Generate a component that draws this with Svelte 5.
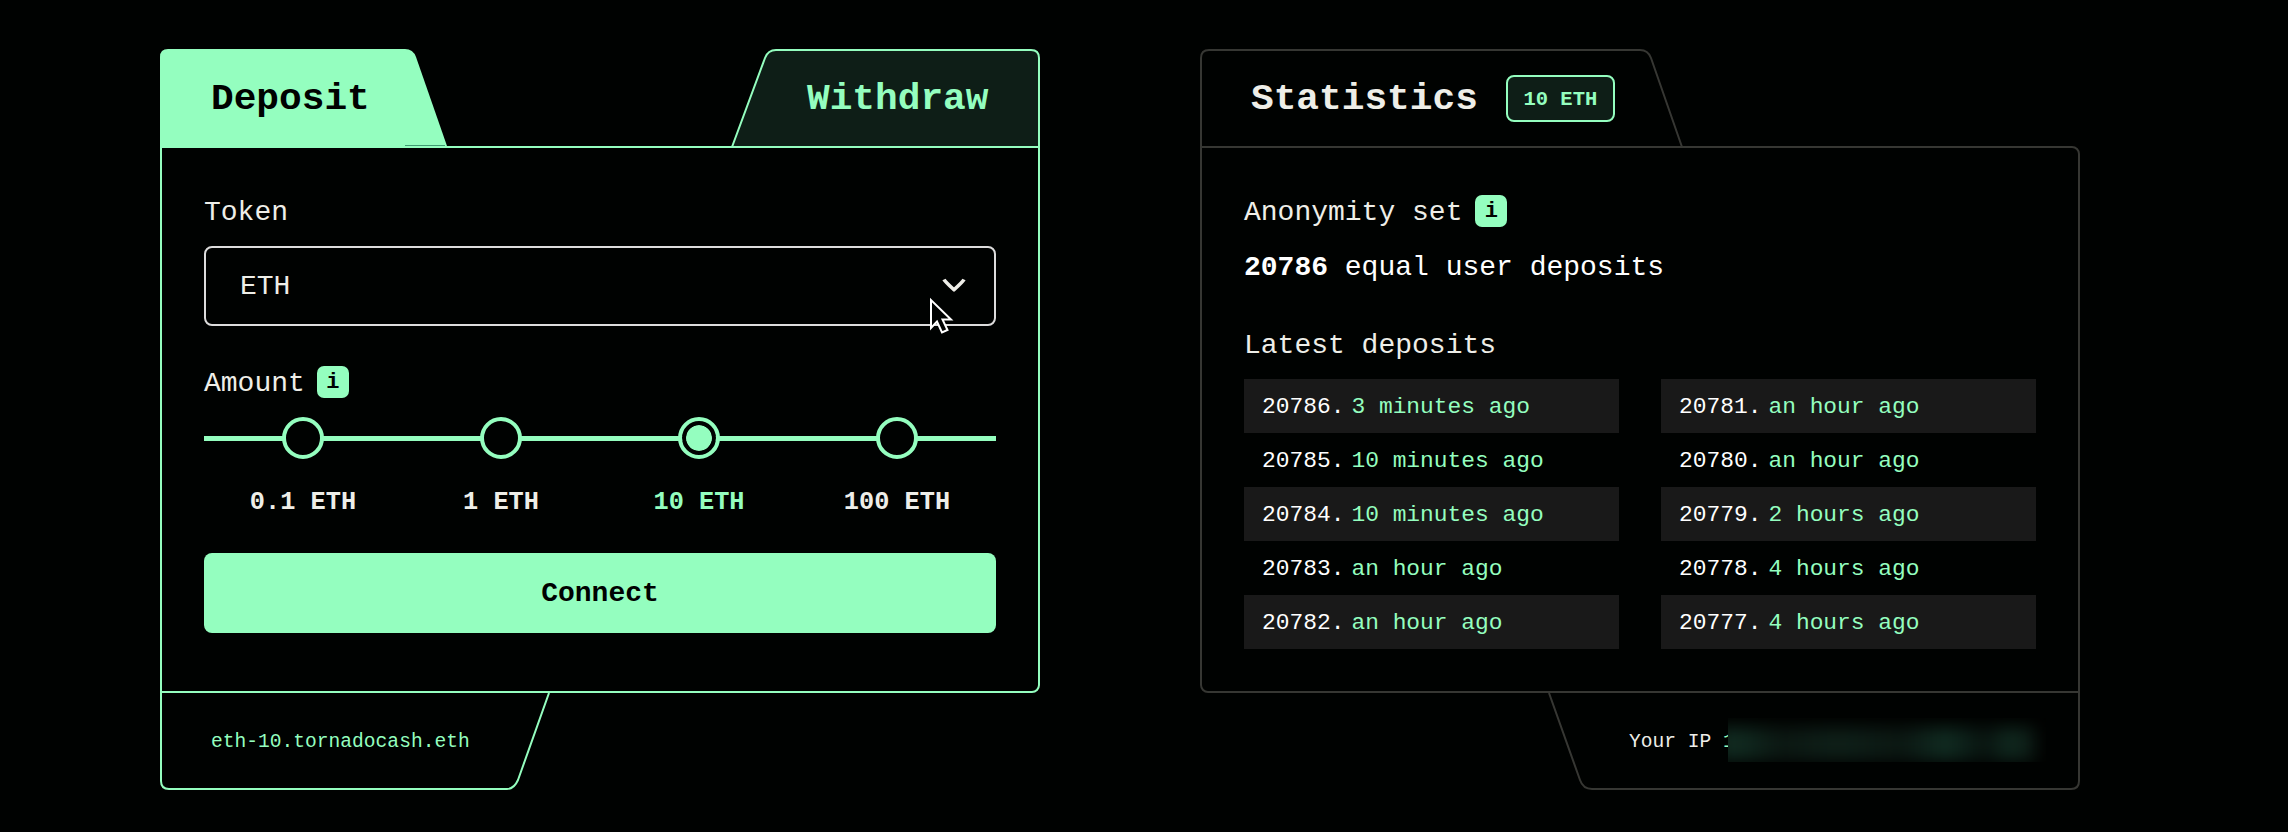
<script>
  const amounts = ['0.1 ETH', '1 ETH', '10 ETH', '100 ETH'];
  let selected = $state(2);
  const columns = [
    [
      [20786, '3 minutes ago'],
      [20785, '10 minutes ago'],
      [20784, '10 minutes ago'],
      [20783, 'an hour ago'],
      [20782, 'an hour ago']
    ],
    [
      [20781, 'an hour ago'],
      [20780, 'an hour ago'],
      [20779, '2 hours ago'],
      [20778, '4 hours ago'],
      [20777, '4 hours ago']
    ]
  ];
</script>

<main>
  <section class="panel green">
    <header>
      <button class="tab deposit">
        <svg class="shape" width="287" height="99" viewBox="0 0 287 99"><path d="M0 99V8Q0 0 8 0H245Q253 0 256 8L287 97V99Z" fill="#94febf" /><path d="M245 96.500H285" stroke="#3f9a72" /></svg>
        <span>Deposit</span>
      </button>
      <button class="tab withdraw">
        <svg class="shape" width="309" height="99" viewBox="0 0 309 99"><path d="M1 98L34 9Q37 1 45 1H300Q308 1 308 9V98" fill="#0e1e17" stroke="#94febf" stroke-width="2" /></svg>
        <span>Withdraw</span>
      </button>
    </header>
    <div class="body">
      <div class="label"><span>Token</span></div>
      <div class="select">
        <span>ETH</span>
        <svg width="24" height="16" viewBox="0 0 24 16"><path d="M2 1.500Q3 3.500 12 11.800Q21 3.500 22 1.500" fill="none" stroke="#eeeee8" stroke-width="3.600" stroke-linejoin="round" /></svg>
        <svg class="cursor" width="26" height="40" viewBox="0 0 26 40"><path d="M2 3V31L8 24.500L13 35.500L18.500 33L13.500 22.500H22Z" fill="#000201" stroke="#fff" stroke-width="2" /></svg>
      </div>
      <div class="label amount"><span>Amount</span><i>i</i></div>
      <div class="steps">
        {#each amounts as amount, n}
          <button class="step" class:on={n === selected} onclick={() => (selected = n)}>
            <span class="dot"></span>
            <b>{amount}</b>
          </button>
        {/each}
      </div>
      <button class="connect">Connect</button>
    </div>
    <footer>
      <div class="foot address">
        <svg class="shape" width="391" height="98" viewBox="0 0 391 98"><path d="M1 0V88Q1 96 9 96H347Q354 96 358 87L389 0" fill="none" stroke="#94febf" stroke-width="2" /></svg>
        <span>eth-10.tornadocash.eth</span>
      </div>
    </footer>
  </section>

  <section class="panel gray">
    <header>
      <div class="tab stats">
        <svg class="shape" width="483" height="99" viewBox="0 0 483 99"><path d="M1 98V9Q1 1 9 1H440Q448 1 451 9L482 98" fill="none" stroke="#363733" stroke-width="2" /></svg>
        <span>Statistics</span>
        <em>10 ETH</em>
      </div>
    </header>
    <div class="body">
      <div class="label set"><span>Anonymity set</span><i>i</i></div>
      <p><strong>20786</strong> equal user deposits</p>
      <div class="label latest"><span>Latest deposits</span></div>
      <div class="columns">
        {#each columns as rows}
          <div class="column">
            {#each rows as [id, time]}
              <div class="row"><span>{id}.</span><span class="time">{time}</span></div>
            {/each}
          </div>
        {/each}
      </div>
    </div>
    <footer class="end">
      <div class="foot ip">
        <svg class="shape" width="534" height="98" viewBox="0 0 534 98"><path d="M3 0L34 87Q37 96 46 96H525Q533 96 533 88V0" fill="none" stroke="#363733" stroke-width="2" /></svg>
        <span class="iptext">Your IP <span class="digit">1</span></span>
        <div class="redacted"><div class="smudge"></div></div>
      </div>
    </footer>
  </section>
</main>

<style>
  :global(body) { background: #000201; }
  main {
    box-sizing: border-box;
    width: 2288px;
    height: 832px;
    padding: 49px 0 0 160px;
    display: flex;
    align-items: flex-start;
    gap: 160px;
    overflow: hidden;
    background: #000201;
    color: #eeeee8;
    font: 28px/40px "Liberation Mono", monospace;
  }
  button { font: inherit; color: inherit; background: none; border: 0; padding: 0; }
  .panel { width: 880px; --line: #94febf; }
  .gray { --line: #363733; }
  header { display: flex; justify-content: space-between; height: 97px; }
  .tab {
    box-sizing: border-box;
    position: relative;
    height: 97px;
    display: flex;
    align-items: center;
    font-size: 37.800px;
    font-weight: 700;
    text-align: left;
  }
  .tab span { position: relative; padding-top: 3px; }
  .shape { position: absolute; left: 0; top: 0; }
  .deposit { width: 287px; padding-left: 51px; color: #000201; }
  .withdraw { width: 309px; padding-left: 76px; color: #94febf; }
  .stats { width: 483px; padding-left: 51px; }
  em {
    box-sizing: border-box;
    position: relative;
    margin: 1px 0 0 28px;
    width: 109px;
    height: 47px;
    border: 2px solid #94febf;
    border-radius: 8px;
    background: #0e1e17;
    color: #94febf;
    font: 700 20.500px/45px "Liberation Mono", monospace;
    text-align: center;
  }
  .body {
    box-sizing: border-box;
    position: relative;
    height: 547px;
    border: 2px solid var(--line);
    border-radius: 0 0 8px 0;
    padding: 43px 42px 0;
  }
  .gray .body { border-radius: 0 8px 0 8px; }
  .label { height: 40px; display: flex; align-items: center; }
  .label span { padding-top: 3px; }
  i {
    width: 32px;
    height: 32px;
    margin-left: 12px;
    border-radius: 7px;
    background: #94febf;
    color: #000201;
    font: 700 22px/34px "Liberation Mono", monospace;
    text-align: center;
  }
  .set i { margin-left: 13px; }
  .select {
    box-sizing: border-box;
    position: relative;
    height: 80px;
    margin-top: 15px;
    padding: 0 28px 0 34px;
    border: 2px solid #dcdcdc;
    border-radius: 8px;
    display: flex;
    align-items: center;
    justify-content: space-between;
  }
  .select span { padding-top: 2px; }
  .cursor { position: absolute; left: 723px; top: 49px; }
  .amount { margin-top: 36px; }
  .steps {
    height: 151px;
    display: grid;
    grid-template-columns: repeat(4, 1fr);
    background: linear-gradient(#94febf, #94febf) 0 34px / 100% 5px no-repeat;
  }
  .step { display: flex; flex-direction: column; align-items: center; justify-content: flex-start; padding-top: 15px; }
  .dot {
    box-sizing: border-box;
    width: 42px;
    height: 42px;
    border: 4px solid #94febf;
    border-radius: 50%;
    background: #000201;
  }
  .on .dot { padding: 4px; background: #94febf content-box; box-shadow: inset 0 0 0 4px #000201; }
  .step b { margin-top: 24px; font-size: 25.300px; line-height: 40px; }
  .on b { color: #94febf; }
  .connect {
    width: 100%;
    height: 80px;
    padding-top: 2px;
    border-radius: 8px;
    background: #94febf;
    color: #000201;
    font-weight: 700;
    display: block;
  }
  footer { display: flex; height: 98px; }
  .end { justify-content: flex-end; }
  .foot { box-sizing: border-box; position: relative; height: 98px; display: flex; align-items: center; font-size: 19.600px; }
  .address { width: 391px; padding-left: 51px; color: #94febf; }
  .ip { width: 534px; padding-left: 83px; }
  .iptext { white-space: pre; }
  .digit { color: #94febf; }
  .redacted { position: relative; width: 318px; height: 44px; margin: 0 0 4px -7px; overflow: hidden; background: #000201; }
  .smudge {
    height: 34px;
    margin: 9px 10px 0 -12px;
    filter: blur(8px);
    background: linear-gradient(90deg, #10291f, #10291f 8%, #0b1712 20%, #0e1f18 38%, #0b1712 58%, #102b21 72%, #08130f 84%, #10291f 92%, #0b1712);
  }
  p { margin: 17px 0 0; height: 39px; color: #fff; }
  .latest { margin-top: 37px; }
  .columns { display: grid; grid-template-columns: 375px 375px; justify-content: space-between; margin-top: 15px; }
  .row { height: 54px; padding-left: 18px; display: flex; gap: 7px; align-items: center; font-size: 22.900px; color: #fff; }
  .row span { padding-top: 2px; }
  .row:nth-child(odd) { background: #191919; }
  .row .time { color: #94febf; }
</style>
